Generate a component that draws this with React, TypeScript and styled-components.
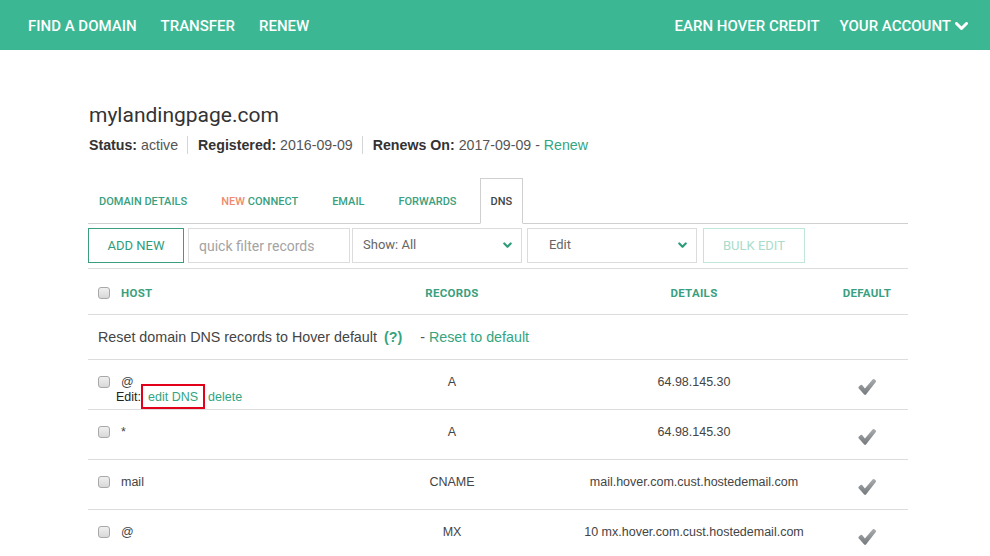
import React from "react";
import styled, { createGlobalStyle } from "styled-components";

const NAV_GREEN = "#3bb794";
const LINK = "#34a580";
const HEAD_GREEN = "#3a9f80";
const LINE = "#dcdcdc";

const Global = createGlobalStyle`
  html, body { margin: 0; padding: 0; background: #fff; }
  body { font-family: "Liberation Sans", Arial, sans-serif; color: #444; }
  * { box-sizing: border-box; }
`;

const Nav = styled.nav`
  height: 50px;
  background: ${NAV_GREEN};
  display: flex;
  align-items: center;
  justify-content: space-between;
  padding: 2px 22px 0 28px;
  font-family: Roboto, sans-serif;
  font-size: 15px;
  font-weight: 500;
  color: #fff;
  text-transform: uppercase;
`;

const NavGroup = styled.div<{ $gap: number }>`
  display: flex;
  align-items: center;
  gap: ${(p) => p.$gap}px;
`;

const NavItem = styled.span`
  display: inline-flex;
  align-items: center;
  gap: 4px;
  white-space: nowrap;
`;

const Main = styled.main`
  width: 820px;
  margin-left: 88px;
  padding-top: 51px;
`;

const Title = styled.h1`
  margin: 0 0 0 1px;
  font-family: Roboto, sans-serif;
  font-weight: 400;
  font-size: 21px;
  line-height: 28px;
  color: #333;
`;

const StatusLine = styled.div`
  display: flex;
  align-items: center;
  margin: 7px 0 0 1px;
  font-size: 14.2px;
  line-height: 20px;
  color: #555;
`;

const StatusItem = styled.span`
  padding: 0 9px 0 10px;
  border-left: 1px solid #d6d6d6;
  line-height: 18px;
  &:first-child { padding-left: 0; border-left: none; }
  b { color: #333; }
`;

const GreenLink = styled.a`
  color: ${LINK};
  text-decoration: none;
`;

const TabBar = styled.div`
  display: flex;
  align-items: flex-end;
  gap: 12px;
  height: 46px;
  margin-top: 24px;
  border-bottom: 1px solid #cfcfcf;
`;

const Tab = styled.div<{ $active?: boolean }>`
  height: ${(p) => (p.$active ? "46px" : "45px")};
  display: flex;
  align-items: center;
  padding: 0 10px;
  font-family: Roboto, sans-serif;
  font-size: 11px;
  font-weight: 500;
  text-transform: uppercase;
  color: ${(p) => (p.$active ? "#444" : HEAD_GREEN)};
  background: #fff;
  border: ${(p) => (p.$active ? "1px solid #cfcfcf" : "1px solid transparent")};
  border-bottom: ${(p) => (p.$active ? "1px solid #fff" : "none")};
  margin-bottom: ${(p) => (p.$active ? "-1px" : "0")};
  white-space: nowrap;
`;

const NewTag = styled.span`
  color: #f08a6d;
  margin-right: 3px;
`;

const Toolbar = styled.div`
  display: flex;
  align-items: center;
  padding: 4px 0 5px;
  border-bottom: 1px solid ${LINE};
`;

const Button = styled.button<{ $disabled?: boolean; $ml: number; $w: number }>`
  width: ${(p) => p.$w}px;
  height: 35px;
  margin-left: ${(p) => p.$ml}px;
  padding: 0;
  background: #fff;
  font-family: Roboto, sans-serif;
  font-size: 13px;
  font-weight: 400;
  text-transform: uppercase;
  color: ${(p) => (p.$disabled ? "#a9dccb" : "#2f9d7b")};
  border: 1px solid ${(p) => (p.$disabled ? "#bfe6d8" : "#3c9e80")};
  border-radius: 0;
`;

const FilterInput = styled.input`
  width: 162px;
  height: 35px;
  margin-left: 4px;
  padding: 0 10px;
  border: 1px solid #dcdcdc;
  font-family: Roboto, sans-serif;
  font-size: 14px;
  color: #555;
  outline: none;
  &::placeholder { color: #a3a3a3; }
`;

const Select = styled.div<{ $ml: number; $pl: number }>`
  width: 170px;
  height: 35px;
  margin-left: ${(p) => p.$ml}px;
  padding: 0 9px 0 ${(p) => p.$pl}px;
  border: 1px solid #dcdcdc;
  display: flex;
  align-items: center;
  justify-content: space-between;
  font-family: Roboto, sans-serif;
  font-size: 13px;
  color: #666;
  span { margin-top: -2px; }
`;

const Grid = styled.div`
  display: grid;
  grid-template-columns: 292px 144px 302px 82px;
`;

const HeadRow = styled(Grid)`
  height: 46px;
  align-items: center;
  padding-top: 3px;
  border-bottom: 1px solid ${LINE};
  font-family: Roboto, sans-serif;
  font-size: 11.5px;
  font-weight: 700;
  letter-spacing: 0.3px;
  color: ${HEAD_GREEN};
  text-transform: uppercase;
`;

const HostCell = styled.div`
  display: flex;
  flex-direction: column;
  padding-left: 10px;
`;

const HostLine = styled.div`
  display: flex;
  align-items: center;
  gap: 11px;
  line-height: 14px;
`;

const Center = styled.div<{ $shift?: number }>`
  text-align: center;
  padding-left: ${(p) => p.$shift ?? 0}px;
  line-height: 14px;
`;

const Check = styled.input.attrs({ type: "checkbox" })`
  appearance: none;
  -webkit-appearance: none;
  width: 12px;
  height: 12px;
  margin: 0;
  border: 1px solid #a8a8a8;
  border-radius: 3px;
  background: linear-gradient(#f0f0f0, #d8d8d8);
  flex: none;
`;

const ResetRow = styled.div`
  height: 45px;
  display: flex;
  align-items: center;
  padding: 0 0 0 10px;
  border-bottom: 1px solid ${LINE};
  font-size: 14.3px;
  color: #444;
`;

const Help = styled.b`
  color: ${LINK};
  margin-left: 7px;
`;

const Dash = styled.span`
  margin-left: 18px;
  color: #555;
`;

const Row = styled(Grid)`
  height: 50px;
  padding-top: 15px;
  border-bottom: 1px solid ${LINE};
  font-size: 12.5px;
  color: #444;
`;

const EditLine = styled.div`
  display: flex;
  align-items: center;
  margin: -5px 0 0 18px;
  color: #222;
  font-size: 12.5px;
`;

const Boxed = styled.a`
  display: inline-block;
  padding: 3px 5px 2px 5px;
  height: 25px;
  line-height: 16px;
  border: 2px solid #e3001b;
  color: ${LINK};
  text-decoration: none;
`;

const Plain = styled.a`
  margin-left: 3px;
  color: ${LINK};
  text-decoration: none;
`;

const CheckWrap = styled.div`
  display: flex;
  justify-content: center;
  padding-top: 3px;
`;

const NavChevron = () => (
  <svg width="13" height="9" viewBox="0 0 13 9">
    <polyline points="1.5,1.5 6.5,6.5 11.5,1.5" fill="none" stroke="#fff" strokeWidth="3" strokeLinecap="round" strokeLinejoin="round" />
  </svg>
);

const SelChevron = () => (
  <svg width="9" height="7" viewBox="0 0 9 7">
    <polyline points="1.3,1.5 4.5,4.8 7.7,1.5" fill="none" stroke="#2f9d7b" strokeWidth="2.2" strokeLinecap="round" strokeLinejoin="round" />
  </svg>
);

const Tick = () => (
  <svg width="20" height="18" viewBox="0 0 20 18">
    <defs>
      <linearGradient id="tg" x1="0" y1="0" x2="0" y2="1">
        <stop offset="0" stopColor="#a9adb0" />
        <stop offset="1" stopColor="#74787b" />
      </linearGradient>
    </defs>
    <path
      d="M1.6 10.2 Q1 9.5 1.7 8.8 L3.6 7 Q4.4 6.4 5.1 7.1 L7.9 10.4 L15.8 1.3 Q16.6 0.6 17.4 1.2 L18.8 2.5 Q19.4 3.2 18.8 4 L9 16.6 Q8.1 17.5 7.2 16.6 Z"
      fill="url(#tg)"
    />
  </svg>
);

type Rec = { host: string; type: string; detail: string; edit?: boolean };

const records: Rec[] = [
  { host: "@", type: "A", detail: "64.98.145.30", edit: true },
  { host: "*", type: "A", detail: "64.98.145.30" },
  { host: "mail", type: "CNAME", detail: "mail.hover.com.cust.hostedemail.com" },
  { host: "@", type: "MX", detail: "10 mx.hover.com.cust.hostedemail.com" },
];

export default function App() {
  return (
    <>
      <Global />
      <Nav>
        <NavGroup $gap={24}>
          <NavItem>Find a Domain</NavItem>
          <NavItem>Transfer</NavItem>
          <NavItem>Renew</NavItem>
        </NavGroup>
        <NavGroup $gap={20}>
          <NavItem>Earn Hover Credit</NavItem>
          <NavItem>
            Your Account <NavChevron />
          </NavItem>
        </NavGroup>
      </Nav>
      <Main>
        <Title>mylandingpage.com</Title>
        <StatusLine>
          <StatusItem>
            <b>Status:</b> active
          </StatusItem>
          <StatusItem>
            <b>Registered:</b> 2016-09-09
          </StatusItem>
          <StatusItem>
            <b>Renews On:</b> 2017-09-09 - <GreenLink>Renew</GreenLink>
          </StatusItem>
        </StatusLine>
        <TabBar>
          <Tab>Domain Details</Tab>
          <Tab>
            <NewTag>New</NewTag>Connect
          </Tab>
          <Tab>Email</Tab>
          <Tab>Forwards</Tab>
          <Tab $active>DNS</Tab>
        </TabBar>
        <Toolbar>
          <Button $ml={0} $w={96}>Add New</Button>
          <FilterInput placeholder="quick filter records" />
          <Select $ml={2} $pl={10}>
            <span>Show: All</span>
            <SelChevron />
          </Select>
          <Select $ml={5} $pl={21}>
            <span>Edit</span>
            <SelChevron />
          </Select>
          <Button $ml={6} $w={102} $disabled>Bulk Edit</Button>
        </Toolbar>
        <HeadRow>
          <HostCell>
            <HostLine>
              <Check />
              <span>Host</span>
            </HostLine>
          </HostCell>
          <Center>Records</Center>
          <Center $shift={38}>Details</Center>
          <Center>Default</Center>
        </HeadRow>
        <ResetRow>
          Reset domain DNS records to Hover default
          <Help>(?)</Help>
          <Dash>-</Dash>&nbsp;<GreenLink>Reset to default</GreenLink>
        </ResetRow>
        {records.map((r, i) => (
          <Row key={i}>
            <HostCell>
              <HostLine>
                <Check />
                <span>{r.host}</span>
              </HostLine>
              {r.edit && (
                <EditLine>
                  Edit:
                  <Boxed>edit DNS</Boxed>
                  <Plain>delete</Plain>
                </EditLine>
              )}
            </HostCell>
            <Center>{r.type}</Center>
            <Center $shift={38}>{r.detail}</Center>
            <CheckWrap>
              <Tick />
            </CheckWrap>
          </Row>
        ))}
      </Main>
    </>
  );
}
